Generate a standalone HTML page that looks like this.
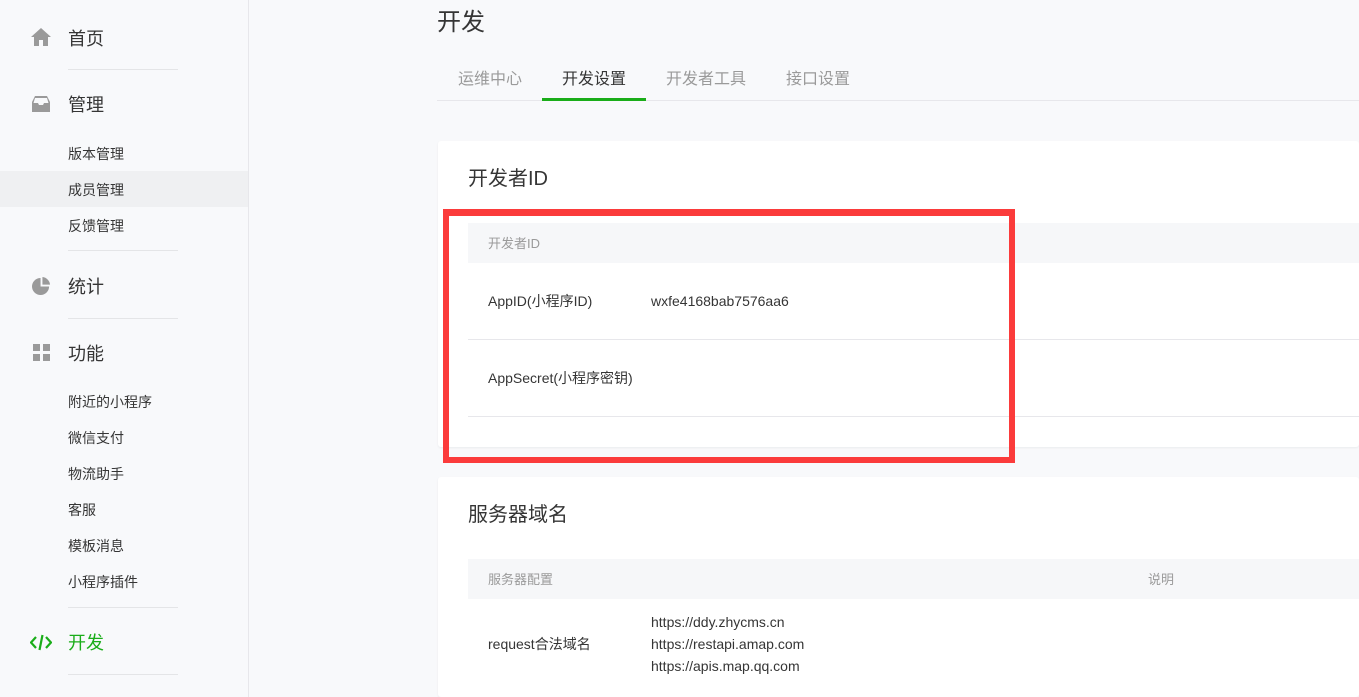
<!DOCTYPE html>
<html style="width:1359px;height:697px;overflow:hidden"><head><meta charset="utf-8"><style>
*{margin:0;padding:0;box-sizing:border-box}
body{width:1359px;height:697px;overflow:hidden;background:#f8f9fb;font-family:"Liberation Sans","Noto Sans CJK SC",sans-serif;color:#353535;position:relative}
.a{position:absolute;white-space:nowrap;line-height:1}
.side{position:absolute;left:0;top:0;width:249px;height:697px;border-right:1px solid #e7e7eb;background:#f8f9fb}
.div{position:absolute;left:68px;width:110px;height:1px;background:#e4e5e7}
.m{font-size:18px;left:68px;color:#353535}
.s{font-size:14px;left:68px;color:#353535}
.card{position:absolute;left:438px;right:0;background:#fff;border-radius:3px;box-shadow:0 1px 2px rgba(0,0,0,.06)}
.th{position:absolute;left:30px;right:0;height:40px;background:#f6f7f9}
.hr{position:absolute;left:30px;right:0;height:1px;background:#e7e7eb}
</style></head><body>
<div class="side">
<svg class="a" style="left:31px;top:28px" width="20" height="18" viewBox="0 0 20 18"><path d="M10 0L0 9h3v9h5v-6h4v6h5V9h3z" fill="#9a9a9a"/></svg>
<div class="a m" style="top:30px">首页</div>
<div class="div" style="top:69px"></div>
<svg class="a" style="left:32px;top:96px" width="18" height="16" viewBox="0 0 18 16"><path d="M3 0h12l3 6v10H0V6zM3 2L1.5 7H6l1 2h4l1-2h4.5L15 2z" fill="#9a9a9a" fill-rule="evenodd"/></svg>
<div class="a m" style="top:96px">管理</div>
<div class="a s" style="top:147px">版本管理</div>
<div style="position:absolute;left:0;top:171px;width:248px;height:36px;background:#eff0f2"></div>
<div class="a s" style="top:183px">成员管理</div>
<div class="a s" style="top:219px">反馈管理</div>
<div class="div" style="top:250px"></div>
<svg class="a" style="left:32px;top:277px" width="19" height="19" viewBox="0 0 20 20"><path d="M9 1A9 9 0 1 0 18 10H9z" fill="#9a9a9a"/><path d="M11 0v8h8A9 9 0 0 0 11 0z" fill="#9a9a9a"/></svg>
<div class="a m" style="top:278px">统计</div>
<div class="div" style="top:318px"></div>
<svg class="a" style="left:33px;top:344px" width="17" height="17" viewBox="0 0 17 17"><rect width="7" height="7" fill="#9a9a9a"/><rect x="10" width="7" height="7" fill="#9a9a9a"/><rect y="10" width="7" height="7" fill="#9a9a9a"/><rect x="10" y="10" width="7" height="7" fill="#9a9a9a"/></svg>
<div class="a m" style="top:345px">功能</div>
<div class="a s" style="top:395px">附近的小程序</div>
<div class="a s" style="top:431px">微信支付</div>
<div class="a s" style="top:467px">物流助手</div>
<div class="a s" style="top:503px">客服</div>
<div class="a s" style="top:539px">模板消息</div>
<div class="a s" style="top:575px">小程序插件</div>
<div class="div" style="top:607px"></div>
<svg class="a" style="left:30px;top:634px" width="22" height="17" viewBox="0 0 22 17"><path d="M6 3L1 8.5 6 14M16 3l5 5.5L16 14M12.5 1L9.5 16" stroke="#1aad19" stroke-width="2.2" fill="none"/></svg>
<div class="a m" style="top:634px;color:#1aad19">开发</div>
<div class="div" style="top:674px"></div>
</div>

<div class="a" style="left:437px;top:11px;font-size:24px">开发</div>
<div style="position:absolute;left:437px;right:0;top:100px;height:1px;background:#e7e7eb"></div>
<div class="a" style="left:458px;top:72px;font-size:16px;color:#9a9a9a">运维中心</div>
<div class="a" style="left:562px;top:72px;font-size:16px;color:#353535">开发设置</div>
<div class="a" style="left:666px;top:72px;font-size:16px;color:#9a9a9a">开发者工具</div>
<div class="a" style="left:786px;top:72px;font-size:16px;color:#9a9a9a">接口设置</div>
<div style="position:absolute;left:542px;top:98px;width:104px;height:3px;background:#1aad19"></div>

<div class="card" style="top:141px;height:306px">
<div class="a" style="left:30px;top:28px;font-size:20px">开发者ID</div>
<div class="th" style="top:82px"></div>
<div class="a" style="left:50px;top:96px;font-size:13px;color:#9a9a9a">开发者ID</div>
<div class="a" style="left:50px;top:153px;font-size:14px">AppID(小程序ID)</div>
<div class="a" style="left:213px;top:153px;font-size:14px">wxfe4168bab7576aa6</div>
<div class="hr" style="top:198px"></div>
<div class="a" style="left:50px;top:230px;font-size:14px">AppSecret(小程序密钥)</div>
<div class="hr" style="top:275px"></div>
</div>

<div class="card" style="top:477px;height:220px">
<div class="a" style="left:30px;top:28px;font-size:20px">服务器域名</div>
<div class="th" style="top:82px"></div>
<div class="a" style="left:50px;top:96px;font-size:13px;color:#9a9a9a">服务器配置</div>
<div class="a" style="left:710px;top:96px;font-size:13px;color:#9a9a9a">说明</div>
<div class="a" style="left:50px;top:160px;font-size:14px">request合法域名</div>
<div class="a" style="left:213px;top:138px;font-size:14px">https://ddy.zhycms.cn</div>
<div class="a" style="left:213px;top:160px;font-size:14px">https://restapi.amap.com</div>
<div class="a" style="left:213px;top:182px;font-size:14px">https://apis.map.qq.com</div>
</div>

<div style="position:absolute;left:443px;top:209px;width:572px;height:254px;border:6px solid #fb3b3b;border-top-width:7px"></div>
</body></html>
